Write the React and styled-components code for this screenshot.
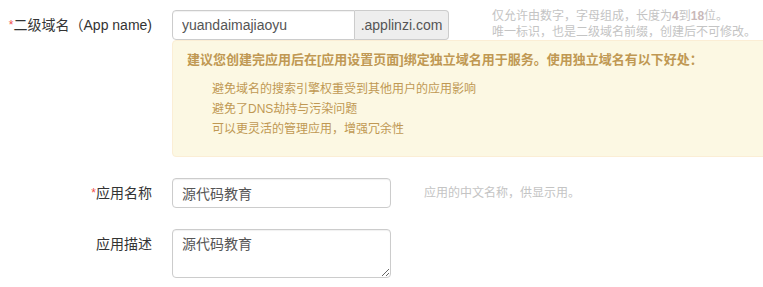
import React from "react";
import styled, { createGlobalStyle } from "styled-components";

const Global = createGlobalStyle`
  html, body { margin: 0; padding: 0; background: #fff; overflow: hidden; }
  body { font-family: "Liberation Sans", "Noto Sans CJK SC", sans-serif; color: #333; }
`;

const Form = styled.form`
  width: 763px;
  padding-top: 10px;
  display: flex;
  flex-direction: column;
  gap: 21px;
`;

const Row = styled.div`
  display: grid;
  grid-template-columns: 152px 1fr;
  column-gap: 20px;
  align-items: ${(p) => (p.$top ? "start" : "center")};
`;

const Label = styled.label`
  font-size: 14px;
  line-height: 30px;
  text-align: right;
  white-space: nowrap;
  color: #333;
`;

const Star = styled.span`
  color: #f0504c;
  font-size: 12px;
  vertical-align: 1px;
`;

const Controls = styled.div`
  display: flex;
  flex-direction: column;
  min-width: 0;
`;

const Line = styled.div`
  display: flex;
  align-items: ${(p) => (p.$center ? "center" : "flex-start")};
`;

const Group = styled.div`
  display: flex;
  height: 30px;
`;

const TextInput = styled.input`
  box-sizing: border-box;
  width: ${(p) => p.$w}px;
  height: 30px;
  border: 1px solid #ccc;
  border-radius: ${(p) => (p.$joined ? "4px 0 0 4px" : "4px")};
  padding: 4px 9px;
  font-family: "Liberation Sans", "Noto Sans CJK SC", sans-serif;
  font-size: 14px;
  color: #555;
  background: #fff;
  outline: none;
  box-shadow: inset 0 1px 1px rgba(0, 0, 0, 0.06);
`;

const Addon = styled.span`
  box-sizing: border-box;
  width: 94px;
  height: 30px;
  border: 1px solid #ccc;
  border-left: none;
  border-radius: 0 4px 4px 0;
  background: #eee;
  font-size: 14px;
  line-height: 28px;
  text-align: center;
  color: #555;
`;

const Help = styled.div`
  margin-left: ${(p) => p.$ml}px;
  margin-top: ${(p) => p.$mt || 0}px;
  font-size: 12px;
  line-height: 16px;
  color: #c4c4c4;
  white-space: nowrap;
`;

const Num = styled.b`
  color: #c9b9b9;
`;

const Alert = styled.div`
  box-sizing: border-box;
  width: 600px;
  background: #fcf8e3;
  border: 1px solid #fbeed5;
  border-radius: 4px;
  padding: 9px 14px 8px;
  color: #c09853;
`;

const AlertTitle = styled.div`
  font-size: 13px;
  line-height: 20px;
  font-weight: bold;
  white-space: nowrap;
`;

const List = styled.ul`
  list-style: none;
  margin: 9px 0 9px;
  padding-left: 25px;
`;

const Item = styled.li`
  font-size: 12px;
  line-height: 20px;
`;

const Area = styled.textarea`
  box-sizing: border-box;
  width: 219px;
  height: 49px;
  border: 1px solid #ccc;
  border-radius: 4px;
  padding: 4px 9px;
  font-family: "Liberation Sans", "Noto Sans CJK SC", sans-serif;
  font-size: 14px;
  line-height: 20px;
  color: #555;
  outline: none;
  display: block;
  box-shadow: inset 0 1px 1px rgba(0, 0, 0, 0.06);
`;

export default function App() {
  return (
    <>
      <Global />
      <Form onSubmit={(e) => e.preventDefault()}>
        <Row $top>
          <Label><Star>*</Star>二级域名（App name)</Label>
          <Controls>
            <Line>
              <Group>
                <TextInput $w={183} $joined defaultValue="yuandaimajiaoyu" />
                <Addon>.applinzi.com</Addon>
              </Group>
              <Help $ml={43} $mt={-2}>
                仅允许由数字，字母组成，长度为<Num>4</Num>到<Num>18</Num>位。
                <br />
                唯一标识，也是二级域名前缀，创建后不可修改。
              </Help>
            </Line>
            <Alert>
              <AlertTitle>建议您创建完应用后在[应用设置页面]绑定独立域名用于服务。使用独立域名有以下好处：</AlertTitle>
              <List>
                <Item>避免域名的搜索引擎权重受到其他用户的应用影响</Item>
                <Item>避免了DNS劫持与污染问题</Item>
                <Item>可以更灵活的管理应用，增强冗余性</Item>
              </List>
            </Alert>
          </Controls>
        </Row>
        <Row>
          <Label><Star>*</Star>应用名称</Label>
          <Line $center>
            <TextInput $w={219} defaultValue="源代码教育" />
            <Help $ml={33}>应用的中文名称，供显示用。</Help>
          </Line>
        </Row>
        <Row $top>
          <Label>应用描述</Label>
          <Area defaultValue="源代码教育" />
        </Row>
      </Form>
    </>
  );
}
